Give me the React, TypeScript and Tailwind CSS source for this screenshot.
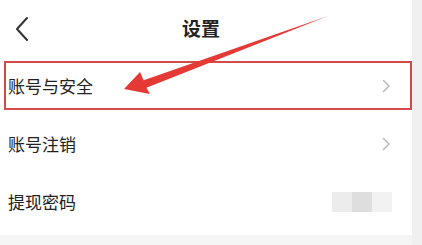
const rows = [
  { id: 'security', label: '账号与安全', arrow: true },
  { id: 'cancel', label: '账号注销', arrow: true },
  { id: 'withdraw', label: '提现密码', arrow: false },
];

export default function App() {
  return (
    <div
      className="relative flex h-[245px] w-[422px] overflow-hidden bg-white"
      style={{ fontFamily: '"Noto Sans CJK SC", "Noto Sans", sans-serif' }}
    >
      <div className="flex w-[412px] flex-col">
        <header className="relative flex h-[57px] items-center justify-center pr-[10px]">
          <svg
            className="absolute left-[15px] top-[16px]"
            width="14"
            height="26"
            viewBox="0 0 14 26"
            fill="none"
            stroke="#333"
            strokeWidth="2"
            strokeLinecap="round"
            strokeLinejoin="round"
          >
            <path d="M12 2 2 13l10 11" />
          </svg>
          <h1 className="text-[19px] font-bold text-[#222]">设置</h1>
        </header>

        {rows.map((row) => (
          <div key={row.id} className="flex h-[58px] items-center justify-between pl-[8px] pr-[22px]">
            <span className="text-[17px] text-[#222]">{row.label}</span>
            {row.arrow ? (
              <svg
                width="8"
                height="14"
                viewBox="0 0 8 14"
                fill="none"
                stroke="#b3b3b3"
                strokeWidth="1.4"
                strokeLinecap="round"
                strokeLinejoin="round"
              >
                <path d="M1.5 1.5 7 7l-5.5 5.5" />
              </svg>
            ) : (
              <div className="mr-[-2px] flex h-[20px]">
                <div className="w-[20px] bg-[#ececec]" />
                <div className="w-[20px] bg-[#dedede]" />
                <div className="w-[20px] bg-[#f2f2f2]" />
              </div>
            )}
          </div>
        ))}

        <div className="mt-[4px] flex-1 bg-[#f5f5f5]" />
      </div>
      <div className="w-[10px] bg-[#f0f0f0]" />

      {/* annotation: red box + arrow */}
      <div className="absolute left-[4px] top-[61px] h-[49px] w-[408px] border-2 border-[#d24a4a]" />
      <svg className="absolute inset-0" width="422" height="245" viewBox="0 0 422 245">
        <polygon
          points="124,89 140,72 143.6,80.2 328,16 146.4,87.8 150,94"
          fill="#e53935"
        />
      </svg>
    </div>
  );
}
